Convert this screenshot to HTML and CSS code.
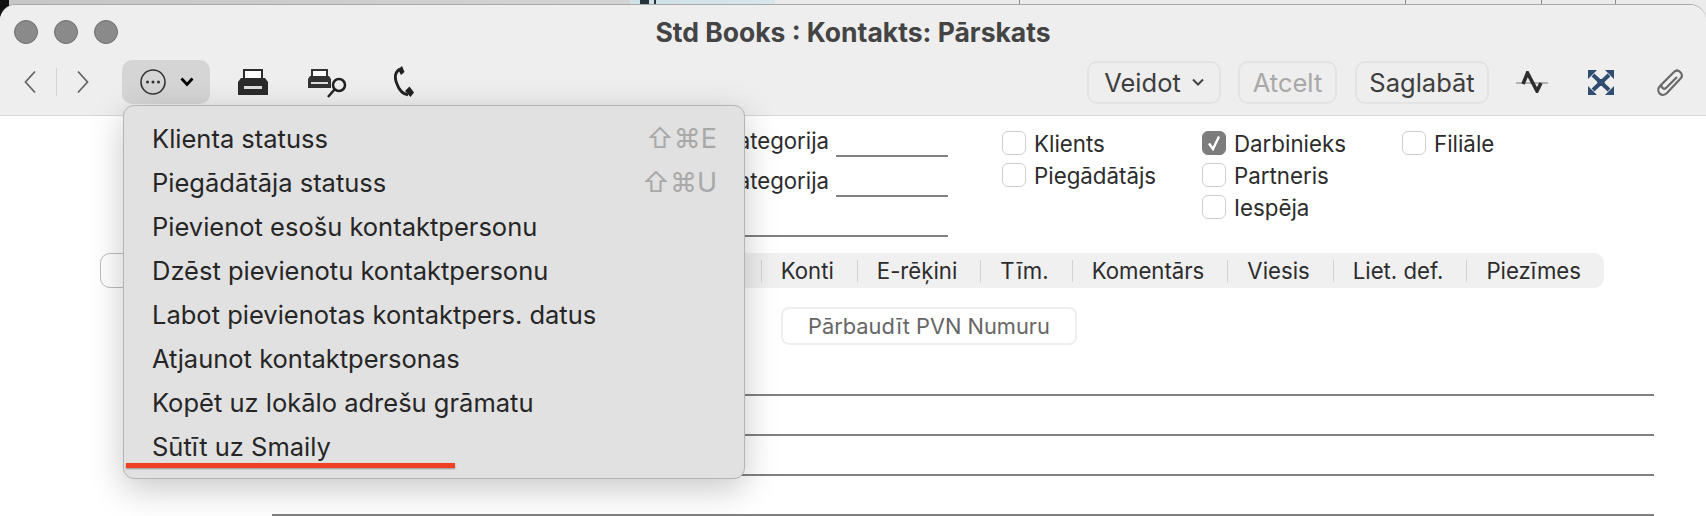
FILE: index.html
```html
<!DOCTYPE html>
<html lang="lv">
<head>
	<meta charset="UTF-8">
	<title>Std Books : Kontakts: Pārskats</title>
	<link rel="stylesheet" href="styles.css">
</head>
<body>
	<div class="desktop">
		<div class="behind">
			<span class="behindMark markA"></span>
			<span class="behindMark markB"></span>
			<span class="behindCell cellA"></span>
			<span class="behindCell cellB"></span>
			<span class="behindCell cellC"></span>
			<span class="behindCell cellD"></span>
		</div>
		<div class="window">
			<header class="head">
				<div class="titleRow">
					<div class="lights">
						<span class="light"></span>
						<span class="light"></span>
						<span class="light"></span>
					</div>
					<h1 class="title">Std Books : Kontakts: Pārskats</h1>
				</div>
				<div class="toolbar">
					<div class="navBtns">
						<svg class="icon" width="12" height="24" viewBox="0 0 12 24"><path d="M11 1.5 1.5 12 11 22.5" fill="none" stroke="#666" stroke-width="1.8"/></svg>
						<span class="navSep"></span>
						<svg class="icon" width="12" height="24" viewBox="0 0 12 24"><path d="M1 1.5 10.5 12 1 22.5" fill="none" stroke="#666" stroke-width="1.8"/></svg>
					</div>
					<div class="moreBtn">
						<svg class="icon" width="26" height="26" viewBox="0 0 26 26">
							<circle cx="13" cy="13" r="12" fill="none" stroke="#333" stroke-width="1.6"/>
							<circle cx="7.5" cy="13" r="1.5" fill="#333"/>
							<circle cx="13" cy="13" r="1.5" fill="#333"/>
							<circle cx="18.5" cy="13" r="1.5" fill="#333"/>
						</svg>
						<svg class="icon" width="14" height="10" viewBox="0 0 14 10"><path d="M1.5 1.5 7 7.5l5.5-6" fill="none" stroke="#000" stroke-width="2.8"/></svg>
					</div>
					<svg class="icon printIcon" width="30" height="26" viewBox="0 0 30 26">
						<path d="M6 9V1h18v8" fill="#fff" stroke="#2b2b2b" stroke-width="2"/>
						<path d="M3 9h24l3 4v13H0V13z" fill="#2b2b2b"/>
						<rect x="6" y="17" width="18" height="3" fill="#ddd"/>
					</svg>
					<svg class="icon previewIcon" width="40" height="30" viewBox="0 0 40 30">
						<path d="M4 7V1h15v6" fill="#fff" stroke="#333" stroke-width="2"/>
						<path d="M2 7h19l2 3v9H0v-9z" fill="#333"/>
						<rect x="3" y="13" width="17" height="2" fill="#ddd"/>
						<circle cx="31" cy="16" r="6" fill="none" stroke="#222" stroke-width="2.5"/>
						<path d="M26.5 20.5 20 28" fill="none" stroke="#222" stroke-width="2.5"/>
					</svg>
					<svg class="icon phoneIcon" width="20" height="32" viewBox="0 0 20 32">
						<path d="M6 3C1 6 0 11 3 18c2 6 6 10 11 11" fill="none" stroke="#222" stroke-width="2.8"/>
						<path d="M4 3.5 8 0l2.5 6-3.5 3z" fill="#222"/>
						<path d="M11 25l4.5-4.5 4.5 6-3.5 4.5z" fill="#222"/>
					</svg>
					<div class="toolRight">
						<span class="toolBtn veidot">Veidot
							<svg class="icon" width="12" height="8" viewBox="0 0 12 8"><path d="M1 1.5 6 6.5l5-5" fill="none" stroke="#444" stroke-width="2"/></svg>
						</span>
						<span class="toolBtn atcelt">Atcelt</span>
						<span class="toolBtn saglabat">Saglabāt</span>
						<svg class="icon pulseIcon" width="32" height="22" viewBox="0 0 32 22">
							<path d="M0 12h32" fill="none" stroke="#777" stroke-width="1"/>
							<path d="M7 13 11.5 2l9.5 18 4-8" fill="none" stroke="#2e2e2e" stroke-width="3.6"/>
						</svg>
						<svg class="icon expandIcon" width="26" height="25" viewBox="0 0 26 25">
							<path d="M5 5l16 15M21 5 5 20" stroke="#2f4d70" stroke-width="4"/>
							<path d="M0 0h9L0 9zM26 0h-9l9 9zM0 25h9L0 16zM26 25h-9l9-9z" fill="#2f4d70"/>
							<rect x="9.5" y="9" width="7" height="7" fill="#2f4d70"/>
						</svg>
						<svg class="icon clipIcon" width="30" height="30" viewBox="0 0 30 30"><path d="M20 5 6 19c-5 6 2 12 7 7L27 11c3-4-3-10-7-6L8 17c-2 3 2 6 4 4L23 10" fill="none" stroke="#6a6a6a" stroke-width="2.2"/></svg>
					</div>
				</div>
			</header>

			<main class="body">
				<div class="fieldsRow">
					<div class="catCol">
						<div class="catRow"><span class="catLabel">Kategorija</span><span class="catLine"></span></div>
						<div class="catRow"><span class="catLabel">Kategorija</span><span class="catLine"></span></div>
						<div class="catRow catLong"><span class="catLine"></span></div>
					</div>
					<div class="checkCol colA">
						<label class="check"><span class="box"></span>Klients</label>
						<label class="check"><span class="box"></span>Piegādātājs</label>
					</div>
					<div class="checkCol colB">
						<label class="check"><span class="box checked"><svg width="16" height="16" viewBox="0 0 16 16"><path d="M3 8.5 7 14 13 1.5" fill="none" stroke="#fff" stroke-width="2.4"/></svg></span>Darbinieks</label>
						<label class="check"><span class="box"></span>Partneris</label>
						<label class="check"><span class="box"></span>Iespēja</label>
					</div>
					<div class="checkCol colC">
						<label class="check"><span class="box"></span>Filiāle</label>
					</div>
				</div>

				<nav class="tabs">
					<span class="tabActive"></span>
					<span class="tab">Konti</span>
					<span class="tab">E-rēķini</span>
					<span class="tab">Tīm.</span>
					<span class="tab">Komentārs</span>
					<span class="tab">Viesis</span>
					<span class="tab">Liet. def.</span>
					<span class="tab">Piezīmes</span>
				</nav>

				<div class="vatRow"><span class="vatBtn">Pārbaudīt PVN Numuru</span></div>

				<div class="lines">
					<div class="line"></div>
					<div class="line"></div>
					<div class="line"></div>
					<div class="line"></div>
				</div>
			</main>

			<div class="menu">
				<div class="menuItem">Klienta statuss <span class="shortcut">⇧⌘E</span></div>
				<div class="menuItem">Piegādātāja statuss <span class="shortcut">⇧⌘U</span></div>
				<div class="menuItem">Pievienot esošu kontaktpersonu</div>
				<div class="menuItem">Dzēst pievienotu kontaktpersonu</div>
				<div class="menuItem">Labot pievienotas kontaktpers. datus</div>
				<div class="menuItem">Atjaunot kontaktpersonas</div>
				<div class="menuItem">Kopēt uz lokālo adrešu grāmatu</div>
				<div class="menuItem">Sūtīt uz Smaily</div>
				<div class="redMark"></div>
			</div>
		</div>
	</div>
</body>
</html>
```

FILE: styles.css
```css
html {
	background: #cfcfcf;
}
body,html {
	margin: 0;
	padding: 0;
	font-family: "Inter", "Liberation Sans", sans-serif;
	color: #2c2c2c;
}
.desktop {
	position: relative;
	height: 516px;
	overflow: hidden;
	background: linear-gradient(to right, #111 0, #111 9px, #c6c6c6 9px, #d4d4d4 630px, #cfe0e8 630px, #d8e6ec 775px, #ebebeb 775px);
}
.behind {
	position: absolute;
	top: 0;
	left: 0;
	right: 0;
	height: 4px;
	overflow: hidden;
}
.behindMark {
	position: absolute;
	top: 0;
	height: 4px;
	background: #26323a;
}
.markA { left: 640px; width: 9px; }
.markB { left: 654px; width: 2px; }
.behindCell {
	position: absolute;
	top: 0;
	width: 1px;
	height: 4px;
	background: #8c8c8c;
}
.cellA { left: 1019px; }
.cellB { left: 1405px; }
.cellC { left: 1541px; }
.cellD { left: 1615px; }
.window {
	position: relative;
	margin-top: 5px;
	height: 511px;
	background: #fff;
	border-radius: 16px 16px 0 0;
	box-shadow: 0 -1px 0 #a9a9a9;
	overflow: hidden;
}
.head {
	height: 110px;
	background: #eeeeee;
	border-bottom: 1px solid #d6d6d6;
}
.titleRow {
	display: flex;
	align-items: center;
	height: 47px;
	padding: 3px 0 0 14px;
	position: relative;
}
.lights {
	display: flex;
	gap: 16px;
}
.light {
	width: 24px;
	height: 24px;
	box-sizing: border-box;
	border-radius: 50%;
	background: #8a8a8a;
	border: 1px solid #717171;
}
.title {
	position: absolute;
	left: 0;
	right: 0;
	margin: 0;
	text-align: center;
	font-size: 26.5px;
	font-weight: 700;
	color: #444;
}
.toolbar {
	display: flex;
	align-items: center;
	height: 44px;
	margin-top: 5px;
	padding-left: 24px;
}
.icon {
	display: block;
	flex: none;
}
.navBtns {
	display: flex;
	align-items: center;
}
.navSep {
	width: 1px;
	height: 28px;
	margin: 0 20px;
	background: #d4d4d4;
}
.moreBtn {
	display: flex;
	align-items: center;
	gap: 14px;
	box-sizing: border-box;
	width: 88px;
	height: 44px;
	margin-left: 33px;
	padding-left: 18px;
	background: #d5d5d5;
	border-radius: 10px;
}
.printIcon { margin-left: 28px; }
.previewIcon { margin-left: 40px; margin-top: 4px; }
.phoneIcon { margin-left: 46px; }
.toolRight {
	display: flex;
	align-items: center;
	margin-left: auto;
	padding-right: 22px;
}
.toolBtn {
	display: flex;
	align-items: center;
	justify-content: center;
	gap: 11px;
	box-sizing: border-box;
	height: 43px;
	border: 2px solid #e3e3e3;
	border-radius: 10px;
	font-size: 25.5px;
	color: #3e3e3e;
}
.veidot { width: 134px; }
.atcelt { width: 99px; margin-left: 17px; color: #a8a8a8; }
.saglabat { width: 134px; margin-left: 18px; }
.pulseIcon { margin-left: 27px; }
.expandIcon { margin-left: 40px; }
.clipIcon { margin-left: 40px; }

.fieldsRow {
	display: flex;
	height: 137px;
}
.catCol {
	width: 948px;
	padding-top: 1px;
}
.catRow {
	display: flex;
	align-items: flex-end;
	justify-content: flex-end;
	height: 40px;
	gap: 7px;
	font-size: 22.2px;
}
.catLabel {
	padding-bottom: 3px;
}
.catLine {
	width: 112px;
	height: 2px;
	background: #808080;
}
.catLong .catLine {
	width: 300px;
}
.checkCol {
	display: flex;
	flex-direction: column;
	padding-top: 15px;
	gap: 8px;
}
.colA { margin-left: 54px; width: 200px; }
.colB { width: 200px; }
.check {
	display: flex;
	align-items: center;
	height: 24px;
	gap: 8px;
	font-size: 22.3px;
}
.box {
	display: flex;
	align-items: center;
	justify-content: center;
	box-sizing: border-box;
	width: 24px;
	height: 24px;
	background: #fff;
	border: 1px solid #cfcfcf;
	border-radius: 6px;
}
.checked {
	background: #7c7c7c;
	border-color: #7c7c7c;
}
.tabs {
	display: flex;
	align-items: center;
	justify-content: flex-end;
	box-sizing: border-box;
	width: 1504px;
	height: 35px;
	margin: 0 0 0 100px;
	background: #f0f0f0;
	border-radius: 10px;
	font-size: 22.2px;
}
.tabActive {
	width: 120px;
	height: 35px;
	margin-right: auto;
	box-sizing: border-box;
	background: #fff;
	border: 1px solid #bdbdbd;
	border-radius: 10px;
}
.tab {
	padding: 0 23px 0 19px;
	border-left: 1px solid #d2d2d2;
	line-height: 22px;
}
.vatRow {
	display: flex;
	padding: 19px 0 0 781px;
}
.vatBtn {
	display: flex;
	align-items: center;
	justify-content: center;
	box-sizing: border-box;
	width: 296px;
	height: 38px;
	border: 2px solid #eeeeee;
	border-radius: 8px;
	font-size: 21.8px;
	color: #666;
}
.lines {
	margin: 11px 52px 0 272px;
}
.line {
	height: 38px;
	border-bottom: 2px solid #808080;
}

/* menu lies over the form */
.menu {
	position: absolute;
	top: 100px;
	left: 123px;
	box-sizing: border-box;
	width: 622px;
	height: 374px;
	padding: 10px 27px 0 28px;
	background: #e1e1e1;
	border: 1px solid #b4b4b4;
	border-radius: 11px;
	box-shadow: 0 10px 34px rgba(0,0,0,0.22);
}
.menuItem {
	display: flex;
	align-items: center;
	justify-content: space-between;
	height: 44px;
	font-size: 25.5px;
	color: #262626;
}
.shortcut {
	color: #a9a9a9;
	font-size: 27px;
}
.redMark {
	position: absolute;
	left: 2px;
	bottom: 10px;
	width: 329px;
	height: 5px;
	background: #ee4023;
	box-shadow: 0 1px 2px rgba(0,0,0,0.35);
}
```
